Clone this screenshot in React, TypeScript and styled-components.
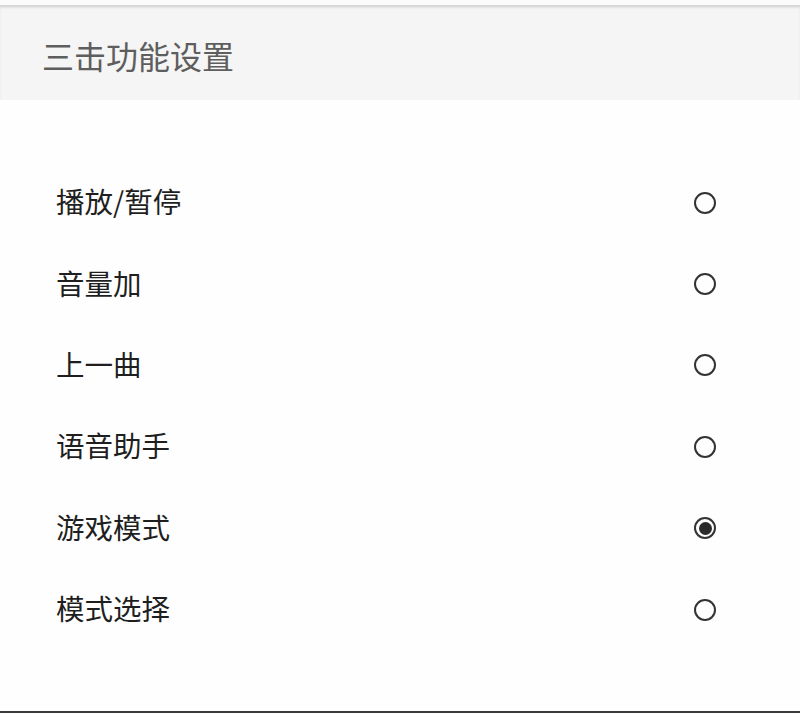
import React, { useState } from "react";
import styled, { createGlobalStyle } from "styled-components";

const Global = createGlobalStyle`
  html, body { margin: 0; padding: 0; background: #ffffff; }
  body { font-family: "Noto Sans CJK SC", "Noto Sans", sans-serif; }
`;

const Page = styled.div`
  width: 800px;
  height: 713px;
  display: flex;
  flex-direction: column;
  background: #fefefe;
  box-sizing: border-box;
  border-bottom: 2px solid #3a3a3a;
  overflow: hidden;
`;

const TopStrip = styled.div`
  height: 5px;
  background: #fbfbfb;
`;

const Header = styled.div`
  height: 95px;
  background: #f5f5f5;
  box-shadow: inset 0 3px 3px -1px #cfcfcf;
  display: flex;
  align-items: center;
  padding-left: 42px;
  padding-top: 4px;
  box-sizing: border-box;
`;

const Title = styled.h1`
  margin: 0;
  font-size: 32px;
  font-weight: 400;
  color: #5e5e5e;
`;

const List = styled.div`
  display: flex;
  flex-direction: column;
  padding-top: 60px;
`;

const Row = styled.label`
  height: 81.4px;
  display: flex;
  align-items: center;
  justify-content: space-between;
  padding: 0 84px 0 56px;
  cursor: pointer;
`;

const Label = styled.span`
  font-size: 28.5px;
  color: #1f1f1f;
  font-weight: 400;
`;

const Radio = styled.span<{ $checked: boolean }>`
  width: 22px;
  height: 22px;
  margin-top: 4px;
  box-sizing: border-box;
  border: 2px solid #333333;
  border-radius: 50%;
  display: flex;
  align-items: center;
  justify-content: center;
  &::after {
    content: "";
    width: 13px;
    height: 13px;
    border-radius: 50%;
    background: #2a2a2a;
    display: ${(p) => (p.$checked ? "block" : "none")};
  }
`;

const items = ["播放/暂停", "音量加", "上一曲", "语音助手", "游戏模式", "模式选择"];

export default function App() {
  const [sel, setSel] = useState(4);
  return (
    <>
      <Global />
      <Page>
        <TopStrip />
        <Header>
          <Title>三击功能设置</Title>
        </Header>
        <List>
          {items.map((t, i) => (
            <Row key={t} onClick={() => setSel(i)}>
              <Label>{t}</Label>
              <Radio $checked={sel === i} />
            </Row>
          ))}
        </List>
      </Page>
    </>
  );
}
